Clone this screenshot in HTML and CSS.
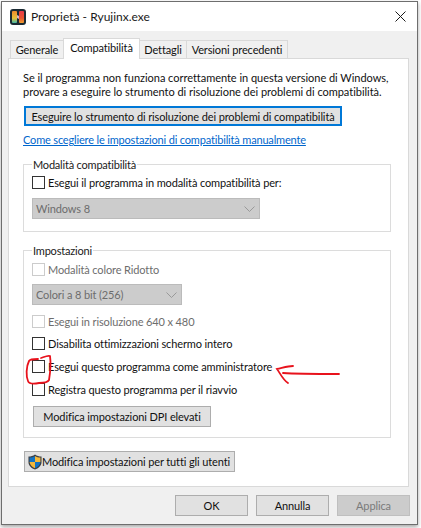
FILE: index.html
```html
<!DOCTYPE html>
<html lang="it">
<head>
    <meta charset="UTF-8">
    <meta name="viewport" content="width=device-width, initial-scale=1.0">
    <title>Proprietà - Ryujinx.exe</title>
    <link rel="stylesheet" href="styles.css">
</head>
<body>
    <div class="window">
        <div class="titlebar">
            <svg class="app-icon" width="16" height="16" viewBox="0 0 16 16">
                <defs>
                    <linearGradient id="barLeft" x1="0" y1="0" x2="0" y2="1">
                        <stop offset="0" stop-color="#f08a2c"/>
                        <stop offset="0.6" stop-color="#e8c23a"/>
                        <stop offset="1" stop-color="#3fb8a8"/>
                    </linearGradient>
                    <linearGradient id="barRight" x1="0" y1="0" x2="0" y2="1">
                        <stop offset="0" stop-color="#e83a4a"/>
                        <stop offset="0.6" stop-color="#e8552f"/>
                        <stop offset="1" stop-color="#f0a030"/>
                    </linearGradient>
                </defs>
                <rect width="16" height="16" rx="3" fill="#1b2a33"/>
                <rect x="2" y="2" width="5" height="12" rx="1" fill="url(#barLeft)"/>
                <rect x="9" y="2" width="5" height="12" rx="1" fill="url(#barRight)"/>
                <path d="M7 6l2 1v3L7 9z" fill="#d9b8c4"/>
            </svg>
            <span class="title">Proprietà - Ryujinx.exe</span>
            <svg class="close" width="11" height="11" viewBox="0 0 11 11">
                <path d="M.5.5l10 10M10.500.5l-10 10" stroke="#1a1a1a" stroke-width="1" fill="none"/>
            </svg>
        </div>
        <div class="body">
            <div class="tabs">
                <div class="tab tab-1">Generale</div>
                <div class="tab tab-2 active">Compatibilità</div>
                <div class="tab tab-3">Dettagli</div>
                <div class="tab tab-4">Versioni precedenti</div>
            </div>
            <div class="panel">
                <p class="intro">Se il programma non funziona correttamente in questa versione di Windows,<br>provare a eseguire lo strumento di risoluzione dei problemi di compatibilità.</p>
                <div class="btn btn-focus">Eseguire lo strumento di risoluzione dei problemi di compatibilità</div>
                <a class="link" href="#">Come scegliere le impostazioni di compatibilità manualmente</a>

                <div class="group group-mode">
                    <div class="legend">Modalità compatibilità</div>
                    <label class="check check-first"><span class="box"></span>Esegui il programma in modalità compatibilità per:</label>
                    <div class="select select-wide">Windows 8<svg width="11" height="6" viewBox="0 0 11 6"><path d="M.5.5l5 5 5-5" stroke="#999" fill="none"/></svg></div>
                </div>

                <div class="group group-settings">
                    <div class="legend">Impostazioni</div>
                    <label class="check check-first disabled"><span class="box"></span>Modalità colore Ridotto</label>
                    <div class="select select-narrow">Colori a 8 bit (256)<svg width="11" height="6" viewBox="0 0 11 6"><path d="M.5.5l5 5 5-5" stroke="#999" fill="none"/></svg></div>
                    <label class="check disabled"><span class="box"></span>Esegui in risoluzione 640 x 480</label>
                    <label class="check check-tight"><span class="box"></span>Disabilita ottimizzazioni schermo intero</label>
                    <label class="check"><span class="box"></span>Esegui questo programma come amministratore</label>
                    <label class="check"><span class="box"></span>Registra questo programma per il riavvio</label>
                    <div class="btn btn-dpi">Modifica impostazioni DPI elevati</div>
                </div>

                <div class="btn btn-all">
                    <svg class="shield" width="14" height="16" viewBox="0 0 15 16">
                        <path d="M7.5 0C5.5 1.5 3 2.2.5 2.2v6C.5 12 4 14.800 7.500 16c3.500-1.200 7-4 7-7.800v-6C12 2.200 9.500 1.500 7.500 0z" fill="#3b3f45"/>
                        <path d="M7.500 1.500V8H1.700V3.300c2.100-.1 4-.7 5.800-1.800z" fill="#1273c4"/>
                        <path d="M7.500 1.500c1.800 1.100 3.700 1.700 5.800 1.800V8H7.500z" fill="#f4b83a"/>
                        <path d="M1.700 8h5.800v6.600C4.500 13.400 1.900 11.200 1.700 8z" fill="#f4b83a"/>
                        <path d="M7.500 8h5.800c-.2 3.200-2.800 5.400-5.800 6.600z" fill="#1273c4"/>
                    </svg>Modifica impostazioni per tutti gli utenti
                </div>
            </div>
            <div class="actions">
                <div class="btn btn-action">OK</div>
                <div class="btn btn-action">Annulla</div>
                <div class="btn btn-action btn-disabled">Applica</div>
            </div>
        </div>
    </div>

    <!-- red pen marks drawn over the screenshot -->
    <svg class="marks" width="421" height="528" viewBox="0 0 421 528">
        <path d="M41 358c3-1 7-3 9-2 1 7 0 18-1 24-1 2-5 3-10 3-5 1-10 1-11-2-2-5-2-14 1-20 1-2 5-2 9-2" stroke="#e8121c" stroke-width="1.800" fill="none" stroke-linecap="round"/>
        <path d="M339 374c-20 0-42 0-56-1M293 366c-5 0-11 2-16 3 3 4 6 11 11 14" stroke="#e8121c" stroke-width="1.800" fill="none" stroke-linecap="round"/>
    </svg>
</body>
</html>
```

FILE: styles.css
```css
* { box-sizing: border-box; }
html, body { margin: 0; padding: 0; }
body { width: 421px; height: 528px; overflow: hidden; position: relative; background: #fff; font-family: Lato, sans-serif; font-size: 11px; letter-spacing: -0.12px; color: #111; }

.window { width: 417px; height: 524px; margin: 1px 0 0 1px; border: 1px solid #6e6e6e; box-shadow: 0 2px 4px rgba(0, 0, 0, 0.35); display: flex; flex-direction: column; background: #f0f0f0; }

.titlebar { height: 29px; flex: none; background: #fff; display: flex; align-items: center; padding: 0 0 0 8px; }
.app-icon { flex: none; }
.title { margin-left: 5px; font-size: 12px; letter-spacing: 0; color: #1a1a1a; flex: 1; }
.close { margin-right: 11px; }

.body { flex: 1; padding: 7px 8px 0 6px; display: flex; flex-direction: column; }

.tabs { display: flex; height: 20px; padding-left: 2px; align-items: flex-end; }
.tab { height: 18px; margin-right: -1px; border: 1px solid #d9d9d9; border-bottom: none; background: #f0f0f0; display: flex; align-items: center; justify-content: center; white-space: nowrap; }
.tab-1 { width: 54px; }
.tab-2 { width: 77px; }
.tab-3 { width: 48px; }
.tab-4 { width: 102px; }
.tab.active { height: 21px; margin-bottom: -1px; background: #fff; position: relative; z-index: 1; padding-bottom: 3px; }

.panel { height: 429px; border: 1px solid #d9d9d9; background: #fff; padding: 12px 14px 0 14px; }
.intro { margin: 0; line-height: 14px; letter-spacing: -0.03px; white-space: nowrap; }

.btn { display: flex; align-items: center; justify-content: center; height: 21px; border: 1px solid #adadad; background: #e1e1e1; white-space: nowrap; }
.btn-focus { width: 318px; height: 20px; margin: 7px 0 0 1px; border: 2px solid #0078d7; }
.link { display: block; margin-top: 6px; line-height: 15px; letter-spacing: -0.17px; color: #0066cc; text-decoration: underline; }

.group { border: 1px solid #dcdcdc; width: 368px; padding: 0 0 0 8px; }
.group-mode { height: 68px; margin-top: 17px; }
.group-settings { height: 188px; margin-top: 18px; }
.legend { display: table; height: 14px; line-height: 14px; margin: -7px 0 0 0; padding: 0 1px; letter-spacing: -0.2px; background: #fff; color: #1a1a1a; }

.check { display: flex; align-items: center; height: 13px; margin-top: 10px; white-space: nowrap; color: #111; }
.check-first { margin-top: 4px; }
.group-settings .check-first { margin-top: 5px; }
.check-tight { margin-top: 9px; }
.box { width: 13px; height: 13px; flex: none; margin-right: 3px; border: 1px solid #333; background: #fff; }
.disabled { color: #6d6d6d; }
.disabled .box { border-color: #ccc; }

.select { display: flex; align-items: center; justify-content: space-between; height: 21px; padding: 0 4px 0 3px; border: 1px solid #bbb; background: #ccc; color: #6d6d6d; }
.select-wide { width: 228px; margin-top: 9px; }
.select-narrow { width: 150px; margin-top: 8px; }

.btn-dpi { width: 178px; margin: 10px 0 0 1px; }
.btn-all { width: 211px; margin: 13px 0 0 1px; justify-content: flex-start; padding-left: 3px; }
.shield { flex: none; }

.actions { display: flex; justify-content: flex-end; gap: 8px; margin: 8px -1px 0 0; }
.btn-action { width: 73px; }
.btn-disabled { background: #ccc; border-color: #bfbfbf; color: #7a7a7a; }

.marks { position: absolute; left: 0; top: 0; pointer-events: none; }
```
